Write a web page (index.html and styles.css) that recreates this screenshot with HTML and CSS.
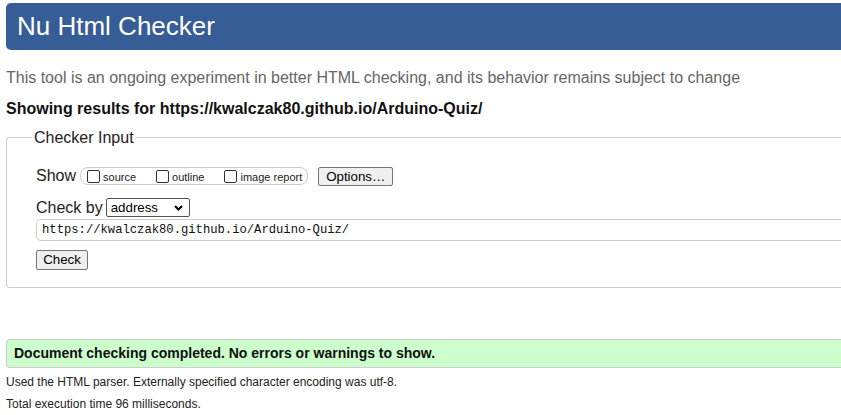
FILE: index.html
```html
<!DOCTYPE html>
<html lang="en">
<head>
<meta charset="utf-8">
<title>Nu Html Checker</title>
<link rel="stylesheet" href="styles.css">
</head>
<body>
<div class="page">
  <header class="banner"><h1 class="title">Nu Html Checker</h1></header>
  <p class="about">This tool is an ongoing experiment in better HTML checking, and its behavior remains subject to change</p>
  <p class="showing">Showing results for https://kwalczak80.github.io/Arduino-Quiz/</p>
  <form class="checker">
    <fieldset class="input-set">
      <legend class="legend">Checker Input</legend>
      <div class="row row-show">
        <span class="label">Show</span>
        <span class="opts">
          <span class="opt"><span class="box"></span><span class="opt-text">source</span></span>
          <span class="opt"><span class="box"></span><span class="opt-text">outline</span></span>
          <span class="opt"><span class="box"></span><span class="opt-text">image report</span></span>
        </span>
        <span class="btn btn-options">Options…</span>
      </div>
      <div class="row row-by">
        <span class="label">Check by</span>
        <span class="select"><span class="select-text">address</span><svg class="chev" width="9" height="6" viewBox="0 0 9 6"><path d="M1 1 L4.5 4.5 L8 1" fill="none" stroke="#000" stroke-width="2"/></svg></span>
      </div>
      <div class="url">https://kwalczak80.github.io/Arduino-Quiz/</div>
      <span class="btn btn-check">Check</span>
    </fieldset>
  </form>
  <p class="success">Document checking completed. No errors or warnings to show.</p>
  <p class="meta">Used the HTML parser. Externally specified character encoding was utf-8.</p>
  <p class="meta meta-last">Total execution time 96 milliseconds.</p>
</div>
</body>
</html>
```

FILE: styles.css
```css
html, body {
  overflow: hidden;
}
body {
  margin: 0;
  padding: 3px 0 0 6px;
  background: #fff;
  font-family: "Liberation Sans", Arial, sans-serif;
  color: #222;
}
.page {
  width: 880px;
}
.banner {
  background: #365d95;
  border-radius: 5px 0 0 5px;
  height: 47px;
  padding-left: 11px;
}
.title {
  margin: 0;
  font-weight: normal;
  font-size: 26px;
  line-height: 47px;
  color: #fff;
}
.about {
  margin: 19px 0 0;
  font-size: 16px;
  line-height: 18px;
  color: #666;
}
.showing {
  margin: 13px 0 0;
  font-size: 16px;
  line-height: 18px;
  font-weight: bold;
  color: #111;
}
.checker {
  margin: 0;
}
.input-set {
  margin: 11px 0 0;
  padding: 0 0 17px 29px;
  border: 1px solid #ccc;
  border-right: none;
  border-radius: 4px 0 0 4px;
}
.legend {
  margin-left: -4px;
  padding: 0 2px;
  font-size: 16px;
  line-height: 17px;
  color: #222;
}
.row {
  display: flex;
  align-items: center;
}
.row-show {
  height: 20px;
  margin-top: 20px;
}
.label {
  font-size: 16px;
  line-height: 20px;
  color: #222;
  margin-right: 4px;
}
.opts {
  display: inline-flex;
  align-items: center;
  height: 16px;
  border: 1px solid #ccc;
  border-radius: 8px;
  padding: 0 5px 0 6px;
  gap: 20px;
}
.opt {
  display: inline-flex;
  align-items: center;
}
.box {
  width: 11px;
  height: 11px;
  border: 1px solid #333;
  border-radius: 2px;
  background: #fff;
  margin: 1px 3px 0 0;
}
.opt-text {
  font-size: 11px;
  line-height: 13px;
  padding-top: 3px;
  color: #222;
}
.btn {
  display: inline-block;
  box-sizing: border-box;
  font-size: 13.3px;
  line-height: 17px;
  color: #000;
  background: #efefef;
  border: 1px solid #767676;
  border-radius: 2px;
  text-align: center;
}
.btn-options {
  width: 75px;
  height: 19px;
  margin-left: 10px;
}
.row-by {
  height: 19px;
  margin-top: 12px;
}
.row-by .label {
  margin-right: 3px;
}
.select {
  box-sizing: border-box;
  display: inline-flex;
  align-items: center;
  width: 84px;
  height: 19px;
  border: 1px solid #555;
  border-radius: 2px;
  padding: 0 6px 0 4px;
  background: #fff;
}
.select-text {
  flex: 1;
  font-size: 13.3px;
  line-height: 17px;
  color: #000;
}
.chev {
  display: block;
}
.url {
  box-sizing: border-box;
  margin-top: 2px;
  height: 22px;
  width: 840px;
  border: 1px solid #ccc;
  border-radius: 5px 0 0 5px;
  padding: 0 0 0 5px;
  font-family: "Liberation Mono", "DejaVu Sans Mono", monospace;
  font-size: 12.2px;
  line-height: 20px;
  color: #111;
}
.btn-check {
  display: block;
  width: 52px;
  height: 20px;
  margin-top: 9px;
  line-height: 18px;
}
.success {
  margin: 51px 0 0;
  padding: 5px 7px;
  background: #ccffcc;
  border: 1px solid #ccc;
  border-right: none;
  border-radius: 4px 0 0 4px;
  font-size: 14px;
  line-height: 17px;
  font-weight: bold;
  color: #111;
}
.meta {
  margin: 7px 0 0;
  font-size: 12px;
  line-height: 14px;
  color: #222;
}
.meta-last {
  margin-top: 8px;
}
```
